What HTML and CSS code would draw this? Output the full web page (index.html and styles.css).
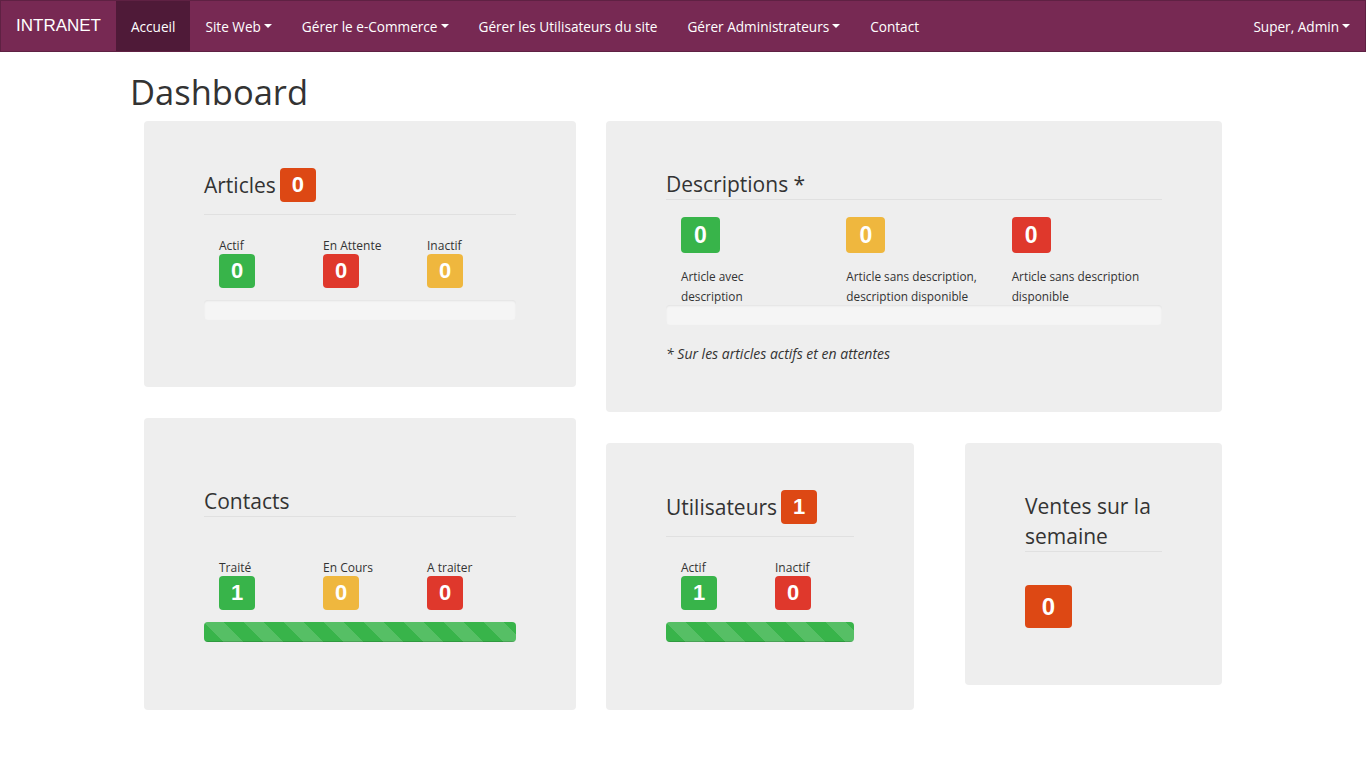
FILE: index.html
```html
<!DOCTYPE html>
<html lang="fr">
<head>
<meta charset="utf-8">
<title>Dashboard</title>
<link rel="stylesheet" href="styles.css">
</head>
<body>
<nav class="navbar">
  <a class="brand" href="#">INTRANET</a>
  <ul class="nav">
    <li class="active"><a href="#">Accueil</a></li>
    <li><a href="#">Site Web <span class="caret"></span></a></li>
    <li><a href="#">Gérer le e-Commerce<span class="caret"></span></a></li>
    <li><a href="#">Gérer les Utilisateurs du site</a></li>
    <li><a href="#">Gérer Administrateurs<span class="caret"></span></a></li>
    <li><a href="#">Contact</a></li>
  </ul>
  <ul class="nav nav-right">
    <li><a href="#">Super, Admin <span class="caret"></span></a></li>
  </ul>
</nav>

<main class="container">
  <h1>Dashboard</h1>
  <div class="dash">
    <div class="col col-left">
      <section class="card card-articles">
        <h3 class="card-title with-badge">Articles <span class="badge bg-primary">0</span></h3>
        <div class="stats stats-3">
          <div class="stat"><div class="stat-label">Actif</div><span class="badge bg-success">0</span></div>
          <div class="stat"><div class="stat-label">En Attente</div><span class="badge bg-danger">0</span></div>
          <div class="stat"><div class="stat-label">Inactif</div><span class="badge bg-warning">0</span></div>
        </div>
        <div class="progress"></div>
      </section>

      <section class="card card-contacts">
        <h3 class="card-title">Contacts</h3>
        <div class="stats stats-3">
          <div class="stat"><div class="stat-label">Traité</div><span class="badge bg-success">1</span></div>
          <div class="stat"><div class="stat-label">En Cours</div><span class="badge bg-warning">0</span></div>
          <div class="stat"><div class="stat-label">A traiter</div><span class="badge bg-danger">0</span></div>
        </div>
        <div class="progress"><div class="progress-bar" style="width:100%"></div></div>
      </section>
    </div>

    <div class="col col-right">
      <section class="card card-desc">
        <h3 class="card-title">Descriptions *</h3>
        <div class="stats stats-3 desc-stats">
          <div class="stat"><span class="badge badge-md bg-success">0</span><div class="desc-label">Article avec<br>description</div></div>
          <div class="stat"><span class="badge badge-md bg-warning">0</span><div class="desc-label">Article sans description,<br>description disponible</div></div>
          <div class="stat"><span class="badge badge-md bg-danger">0</span><div class="desc-label">Article sans description<br>disponible</div></div>
        </div>
        <div class="progress progress-flat"></div>
        <p class="note">* Sur les articles actifs et en attentes</p>
      </section>

      <div class="row-bottom">
        <section class="card card-users">
          <h3 class="card-title with-badge">Utilisateurs <span class="badge bg-primary">1</span></h3>
          <div class="stats stats-2">
            <div class="stat"><div class="stat-label">Actif</div><span class="badge bg-success">1</span></div>
            <div class="stat"><div class="stat-label">Inactif</div><span class="badge bg-danger">0</span></div>
          </div>
          <div class="progress"><div class="progress-bar" style="width:100%"></div></div>
        </section>

        <section class="card card-sales">
          <h3 class="card-title">Ventes sur la semaine</h3>
          <span class="badge badge-lg bg-primary">0</span>
        </section>
      </div>
    </div>
  </div>
</main>
</body>
</html>
```

FILE: styles.css
```css
* { box-sizing: border-box; }

body {
  margin: 0;
  font-family: "Open Sans", "Noto Sans", sans-serif;
  font-size: 14px;
  color: #333;
  background: #fff;
}

a { text-decoration: none; }

/* ---------- navbar ---------- */
.navbar {
  display: flex;
  align-items: stretch;
  height: 52px;
  background: #772953;
  border: 1px solid #5f2143;
}

.brand {
  display: flex;
  align-items: center;
  padding: 0 15px;
  color: #fff;
  font-family: "Liberation Sans", Arial, sans-serif;
  font-size: 17px;
}

.nav {
  display: flex;
  list-style: none;
  margin: 0;
  padding: 0;
}

.nav li { display: flex; }

.nav a {
  display: flex;
  align-items: center;
  padding: 0 15px;
  color: #fff;
  font-size: 13.6px;
  white-space: nowrap;
}

.nav li.active a { background: #4f1a38; }

.nav-right { margin-left: auto; }

.caret {
  display: inline-block;
  width: 0;
  height: 0;
  margin-left: 3px;
  border-top: 4px solid #fff;
  border-left: 4px solid transparent;
  border-right: 4px solid transparent;
}

/* ---------- page ---------- */
.container { padding-left: 130px; }

h1 {
  margin: 20px 0 9px;
  font-size: 34.5px;
  font-weight: 400;
  line-height: 40px;
  color: #333;
}

.dash {
  display: grid;
  grid-template-columns: 432px 616px;
  gap: 30px;
  margin-left: 14px;
  align-items: start;
}

.col {
  display: flex;
  flex-direction: column;
  gap: 31px;
}

.row-bottom {
  display: flex;
  gap: 51px;
  align-items: flex-start;
}

.card {
  background: #eeeeee;
  border-radius: 4px;
  padding: 49px 60px 48px;
}

.card-articles { padding-bottom: 47px; }
.card-desc { padding-top: 48px; }
.card-users { width: 308px; }
.card-sales { width: 257px; padding-top: 48px; padding-bottom: 47px; }

.card-title {
  margin: 0;
  font-size: 21px;
  font-weight: 400;
  line-height: 30px;
  color: #333;
  border-bottom: 1px solid #e0e0e0;
}

.card-title.with-badge {
  display: flex;
  align-items: center;
  gap: 4px;
  margin-top: -2px;
  padding-bottom: 12px;
}

.card-contacts .card-title { margin-top: 19px; }
.card-contacts .stats { margin-top: 42px; }

/* ---------- badges ---------- */
.badge {
  display: inline-flex;
  align-items: center;
  justify-content: center;
  min-width: 36px;
  height: 34px;
  padding: 0 10px;
  border-radius: 4px;
  color: #fff;
  font-family: "Liberation Sans", Arial, sans-serif;
  font-weight: 700;
  font-size: 22px;
  line-height: 1;
}

.badge-md { min-width: 39px; height: 36px; font-size: 23px; }
.badge-lg { min-width: 47px; height: 43px; font-size: 24px; margin-top: 33px; margin-bottom: 10px; }

.bg-primary { background: #dd4814; }
.bg-success { background: #38b44a; }
.bg-warning { background: #efb73e; }
.bg-danger  { background: #df382c; }

/* ---------- stats ---------- */
.stats {
  display: grid;
  margin-top: 22px;
}

.stats-3 { grid-template-columns: repeat(3, 1fr); }
.stats-2 { grid-template-columns: repeat(2, 1fr); }

.stat {
  display: flex;
  flex-direction: column;
  align-items: flex-start;
  padding: 0 15px;
}

.stat-label {
  font-size: 12px;
  line-height: 17px;
  color: #333;
}

.desc-stats { margin-top: 17px; }

.desc-label {
  margin-top: 13px;
  font-size: 11.8px;
  line-height: 20px;
  color: #333;
}

/* ---------- progress ---------- */
.progress {
  height: 20px;
  margin: 12px 0 20px;
  background: #f5f5f5;
  border-radius: 4px;
  box-shadow: inset 0 1px 2px rgba(0, 0, 0, 0.08);
  overflow: hidden;
}

.progress-flat { margin-top: -1px; margin-bottom: 19px; }

.progress-bar {
  height: 100%;
  background-color: #38b44a;
  background-image: linear-gradient(45deg,
    rgba(255,255,255,.15) 25%, transparent 25%, transparent 50%,
    rgba(255,255,255,.15) 50%, rgba(255,255,255,.15) 75%, transparent 75%, transparent);
  background-size: 40px 40px;
  box-shadow: inset 0 -1px 0 rgba(0, 0, 0, 0.15);
}

.note {
  margin: 0;
  font-size: 14px;
  font-style: italic;
  line-height: 20px;
  color: #333;
}
```
